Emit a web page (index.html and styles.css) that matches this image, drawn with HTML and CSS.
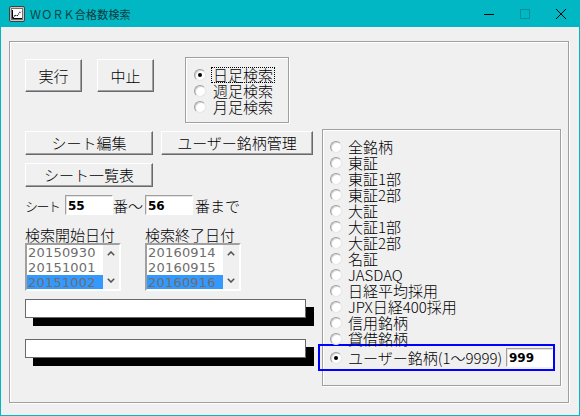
FILE: index.html
```html
<!DOCTYPE html>
<html lang="ja">
<head>
<meta charset="utf-8">
<title>WORK合格数検索</title>
<link rel="stylesheet" href="styles.css">
</head>
<body>
<div class="window">
  <div class="titlebar">
    <svg class="appicon" width="16" height="16" viewBox="0 0 16 16">
      <rect x="0.5" y="0.5" width="15" height="15" rx="1.5" fill="#c8c8c8" stroke="#404040"/>
      <rect x="2.5" y="2.5" width="11" height="11" fill="#fff" stroke="#707070"/>
      <path d="M4 12 L6 9 L8 10 L12 5" fill="none" stroke="#000" stroke-width="1.2" stroke-dasharray="1 1"/>
      <path d="M3.5 4 V12.5 H13" fill="none" stroke="#000" stroke-width="1"/>
    </svg>
    <span class="title">ＷＯＲＫ合格数検索</span>
    <div class="caps">
      <div class="cap"><svg width="10" height="10" viewBox="0 0 10 10"><path d="M0 5.5 H10" stroke="#000" stroke-width="1"/></svg></div>
      <div class="cap"><svg width="10" height="10" viewBox="0 0 10 10"><rect x="0.5" y="0.5" width="9" height="9" fill="none" stroke="#0a8f99" stroke-width="1"/></svg></div>
      <div class="cap"><svg width="10" height="10" viewBox="0 0 10 10"><path d="M0 0 L10 10 M10 0 L0 10" stroke="#000" stroke-width="1"/></svg></div>
    </div>
  </div>
  <div class="client">
    <div class="frame">
      <div class="toprow">
        <div class="btn btn-run">実行</div>
        <div class="btn btn-stop">中止</div>
        <div class="group periods">
          <div class="ritem"><span class="radio on"></span><span class="rlabel focus">日足検索</span></div>
          <div class="ritem"><span class="radio"></span><span class="rlabel">週足検索</span></div>
          <div class="ritem"><span class="radio"></span><span class="rlabel">月足検索</span></div>
        </div>
      </div>
      <div class="main">
        <div class="leftcol">
          <div class="btnrow">
            <div class="btn btn-sheet">シート編集</div>
            <div class="btn btn-user">ユーザー銘柄管理</div>
          </div>
          <div class="btn btn-sheet btn-list">シート一覧表</div>
          <div class="sheetrow">
            <span class="lbl-sheet">シート</span>
            <span class="field">55</span>
            <span class="lbl-mid">番～</span>
            <span class="field">56</span>
            <span class="lbl-end">番まで</span>
          </div>
          <div class="dates">
            <div class="datecol">
              <div class="datelabel">検索開始日付</div>
              <div class="listbox">
                <div class="rows">
                  <div class="row">20150930</div>
                  <div class="row">20151001</div>
                  <div class="row sel">20151002</div>
                </div>
                <div class="sbar">
                  <div class="arrow"><svg width="8" height="5" viewBox="0 0 8 5"><path d="M0.8 4.2 L4 1 L7.2 4.2" fill="none" stroke="#555" stroke-width="1.6"/></svg></div>
                  <div class="arrow"><svg width="8" height="5" viewBox="0 0 8 5"><path d="M0.8 0.8 L4 4 L7.2 0.8" fill="none" stroke="#555" stroke-width="1.6"/></svg></div>
                </div>
              </div>
            </div>
            <div class="datecol">
              <div class="datelabel">検索終了日付</div>
              <div class="listbox">
                <div class="rows">
                  <div class="row">20160914</div>
                  <div class="row">20160915</div>
                  <div class="row sel">20160916</div>
                </div>
                <div class="sbar">
                  <div class="arrow"><svg width="8" height="5" viewBox="0 0 8 5"><path d="M0.8 4.2 L4 1 L7.2 4.2" fill="none" stroke="#555" stroke-width="1.6"/></svg></div>
                  <div class="arrow"><svg width="8" height="5" viewBox="0 0 8 5"><path d="M0.8 0.8 L4 4 L7.2 0.8" fill="none" stroke="#555" stroke-width="1.6"/></svg></div>
                </div>
              </div>
            </div>
          </div>
          <div class="bar bar1"></div>
          <div class="bar bar2"></div>
        </div>
        <div class="group markets">
          <div class="mitem"><span class="radio"></span><span class="mlabel">全銘柄</span></div>
          <div class="mitem"><span class="radio"></span><span class="mlabel">東証</span></div>
          <div class="mitem"><span class="radio"></span><span class="mlabel">東証1部</span></div>
          <div class="mitem"><span class="radio"></span><span class="mlabel">東証2部</span></div>
          <div class="mitem"><span class="radio"></span><span class="mlabel">大証</span></div>
          <div class="mitem"><span class="radio"></span><span class="mlabel">大証1部</span></div>
          <div class="mitem"><span class="radio"></span><span class="mlabel">大証2部</span></div>
          <div class="mitem"><span class="radio"></span><span class="mlabel">名証</span></div>
          <div class="mitem"><span class="radio"></span><span class="mlabel">JASDAQ</span></div>
          <div class="mitem"><span class="radio"></span><span class="mlabel">日経平均採用</span></div>
          <div class="mitem"><span class="radio"></span><span class="mlabel">JPX日経400採用</span></div>
          <div class="mitem"><span class="radio"></span><span class="mlabel">信用銘柄</span></div>
          <div class="mitem"><span class="radio"></span><span class="mlabel">貸借銘柄</span></div>
          <div class="mitem useritem"><span class="radio on"></span><span class="mlabel">ユーザー銘柄(1～9999)</span><span class="field field-user">999</span></div>
        </div>
      </div>
    </div>
  </div>
</div>
</body>
</html>
```
FILE: styles.css
```css
* { box-sizing: border-box; }
html, body { margin: 0; padding: 0; }
body {
  width: 580px;
  height: 416px;
  overflow: hidden;
  font-family: "Noto Sans CJK JP", "Noto Sans", sans-serif;
  font-weight: 300;
  font-size: 15px;
  color: #000;
  background: #f0f0f0;
}
.window {
  width: 580px;
  height: 416px;
  border: 1px solid #00b7c3;
  border-top: 0;
  display: flex;
  flex-direction: column;
  background: #f0f0f0;
}
.titlebar {
  height: 27px;
  background: #00b7c3;
  display: flex;
  align-items: center;
  padding-left: 8px;
}
.appicon { flex: none; }
.title {
  margin-left: 5px;
  font-size: 11px;
  font-weight: 400;
  letter-spacing: 0.2px;
  color: #0e3a40;
  line-height: 14px;
}
.caps {
  margin-left: auto;
  display: flex;
  height: 27px;
}
.cap {
  width: 36px;
  height: 27px;
  display: flex;
  align-items: center;
  justify-content: center;
}
.client {
  flex: 1;
  display: flex;
  flex-direction: column;
}
.frame {
  margin: 14px 10px 12px 8px;
  flex: 1;
  border: 1px solid #a0a0a0;
  box-shadow: inset 1px 1px 0 #fff, 1px 1px 0 #fff;
  padding: 15px 7px 0 15px;
}
.group {
  border: 1px solid #a0a0a0;
  box-shadow: inset 1px 1px 0 #fff, 1px 1px 0 #fff;
}
.toprow {
  display: flex;
  align-items: flex-start;
  height: 66px;
}
.btn {
  background: #f0f0f0;
  border: 1px solid;
  border-color: #fff #696969 #696969 #fff;
  box-shadow: inset -1px -1px 0 #a0a0a0;
  display: flex;
  align-items: center;
  justify-content: center;
  line-height: 16px;
  white-space: nowrap;
}
.btn-run, .btn-stop {
  width: 57px;
  height: 33px;
  margin-top: 2px;
}
.btn-stop { margin-left: 15px; }
.periods {
  margin-left: 31px;
  width: 104px;
  height: 66px;
  padding: 9px 0 0 8px;
}
.ritem {
  height: 16px;
  display: flex;
  align-items: center;
}
.radio {
  flex: none;
  width: 12px;
  height: 12px;
  border-radius: 50%;
  background: #fff;
  border: 1px solid;
  border-color: #a0a0a0 #e6e6e6 #e6e6e6 #a0a0a0;
  box-shadow: inset 1px 1px 0 #d4d4d4;
  display: flex;
  align-items: center;
  justify-content: center;
}
.radio.on::after {
  content: "";
  width: 4px;
  height: 4px;
  border-radius: 50%;
  background: #000;
}
.rlabel {
  margin-left: 5px;
  padding: 0 1px;
  border: 1px dotted transparent;
  line-height: 14px;
  white-space: nowrap;
}
.rlabel.focus { border-color: #000; }
.main {
  display: flex;
  align-items: flex-start;
  margin-top: 6px;
}
.leftcol {
  width: 297px;
  padding-top: 2px;
}
.btnrow {
  display: flex;
  gap: 8px;
}
.btn-sheet { width: 128px; height: 24px; }
.btn-user { width: 152px; height: 24px; }
.btn-list { margin-top: 8px; }
.sheetrow {
  margin-top: 8px;
  height: 20px;
  display: flex;
  align-items: center;
  white-space: nowrap;
}
.lbl-sheet {
  width: 40px;
  font-size: 13px;
  letter-spacing: -1.5px;
}
.lbl-mid { width: 32px; }
.lbl-end { margin-left: 2px; }
.field {
  width: 48px;
  height: 20px;
  background: #fff;
  border: 1px solid;
  border-color: #a0a0a0 #fff #fff #a0a0a0;
  box-shadow: inset 1px 1px 0 #e3e3e3;
  font-family: "DejaVu Sans", sans-serif;
  font-weight: bold;
  font-size: 12px;
  line-height: 18px;
  padding-left: 2px;
  padding-top: 1px;
}
.dates {
  display: flex;
  gap: 24px;
  margin-top: 12px;
}
.datecol { width: 96px; }
.datelabel {
  height: 16px;
  line-height: 16px;
  white-space: nowrap;
}
.listbox {
  width: 96px;
  height: 48px;
  border: 2px solid;
  border-color: #a0a0a0 #fff #fff #a0a0a0;
  background: #fff;
  display: flex;
  overflow: hidden;
}
.rows {
  width: 76px;
}
.row {
  height: 15px;
  line-height: 15px;
  font-family: "DejaVu Sans", sans-serif;
  font-weight: 400;
  font-size: 13px;
  letter-spacing: 0.2px;
  color: #6d6d6d;
  padding-left: 1px;
  white-space: nowrap;
}
.row.sel { background: #3399ff; }
.sbar {
  width: 16px;
  margin-left: auto;
  background: #f0f0f0;
  display: flex;
  flex-direction: column;
  justify-content: space-between;
}
.arrow {
  height: 17px;
  display: flex;
  align-items: center;
  justify-content: center;
}
.bar {
  width: 281px;
  height: 19px;
  background: #fff;
  border: 1px solid #696969;
  box-shadow: 8px 8px 0 #000;
}
.bar1 { margin-top: 8px; }
.bar2 { margin-top: 21px; }
.markets {
  width: 239px;
  height: 257px;
  padding: 9px 0 0 7px;
}
.mitem {
  height: 16px;
  display: flex;
  align-items: center;
  white-space: nowrap;
}
.mlabel {
  margin-left: 6px;
  line-height: 16px;
}
.useritem {
  margin-top: -3px;
  margin-left: -12px;
  width: 237px;
  height: 27px;
  border: 2px solid #0000ff;
  padding-left: 10px;
}
.field-user {
  margin-left: auto;
  width: 47px;
  height: 19px;
  line-height: 17px;
}
```
